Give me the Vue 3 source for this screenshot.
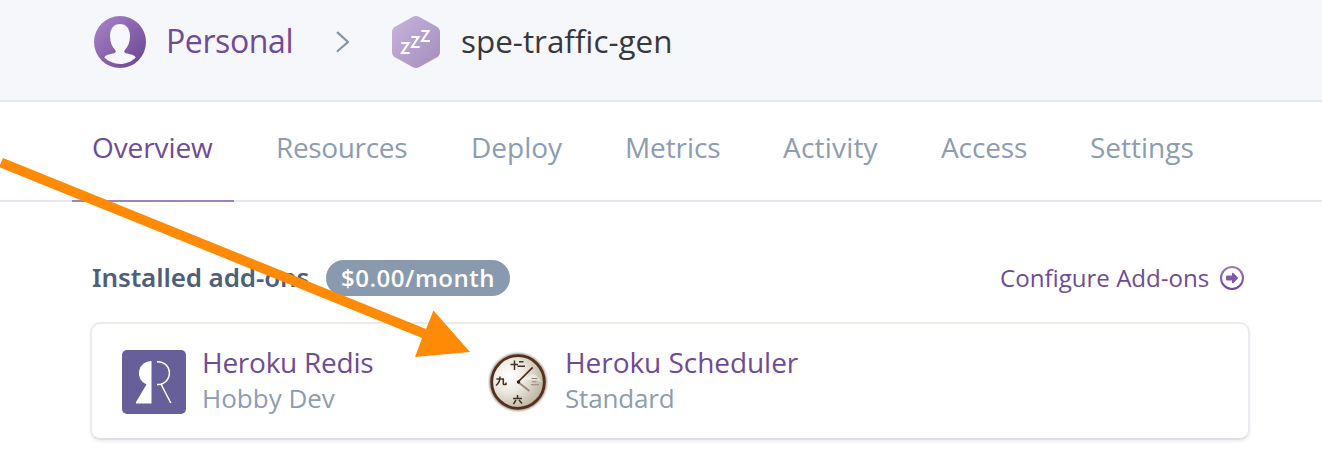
<script setup>
const tabs = [
  { label: 'Overview', cls: 'overview' },
  { label: 'Resources', cls: 'resources' },
  { label: 'Deploy', cls: 'deploy' },
  { label: 'Metrics', cls: 'metrics' },
  { label: 'Activity', cls: 'activity' },
  { label: 'Access', cls: 'access' },
  { label: 'Settings', cls: 'settings' },
]
</script>

<template>
  <div class="page">
    <header class="crumbs">
      <svg class="avatar" width="52" height="52" viewBox="0 0 52 52">
        <defs>
          <linearGradient id="avatarFill" x1="0" y1="0" x2="1" y2="1">
            <stop offset="0" stop-color="#aa86cb" />
            <stop offset="1" stop-color="#69428f" />
          </linearGradient>
        </defs>
        <circle cx="26" cy="26" r="26" fill="url(#avatarFill)" />
        <path d="M26 8C20 8 16 12.500 16 20C16 26 18 31 21.500 34.500C22.500 36 21.500 36.800 19 37.500C15.500 38.300 11.800 38.800 10.300 41.500C14.500 45.800 20 48 26 48S37.500 45.800 41.700 41.500C40.200 38.800 36.500 38.300 33 37.500C30.500 36.800 29.500 36 30.500 34.500C34 31 36 26 36 20C36 12.500 32 8 26 8Z" fill="#f7f8fb" />
      </svg>
      <span class="owner">Personal</span>
      <svg class="chevron" width="14" height="22" viewBox="0 0 14 22">
        <path d="M1.700 1.700L12 11L1.700 20" fill="none" stroke="#8496ac" stroke-width="2.300" stroke-linecap="round" stroke-linejoin="round" />
      </svg>
      <svg class="hex" width="48" height="52" viewBox="0 0 48 52">
        <defs>
          <linearGradient id="hexFill" x1="0" y1="0" x2="1" y2="1">
            <stop offset="0" stop-color="#c7b4dc" />
            <stop offset="1" stop-color="#a48dbc" />
          </linearGradient>
        </defs>
        <path d="M20.500 .9Q24 -.9 27.500 .9L45 10.700Q48 12.600 48 16V36Q48 39.400 45 41.300L27.500 51.100Q24 52.900 20.500 51.100L3 41.300Q0 39.400 0 36V16Q0 12.600 3 10.700Z" fill="url(#hexFill)" />
        <g fill="none" stroke="#fff" stroke-width="2.100">
          <path d="M9.300 27H16.500L10 37H17.700" />
          <path d="M19.300 21H26.500L20 31H27.700" />
          <path d="M29.300 15H36.500L30 25H37.900" />
        </g>
      </svg>
      <span class="app">spe-traffic-gen</span>
    </header>

    <nav class="tabs">
      <a v-for="(t, i) in tabs" :key="t.label" class="tab" :class="[t.cls, { active: i === 0 }]">{{ t.label }}</a>
    </nav>

    <main class="content">
      <div class="heading">
        <h2 class="title">Installed add-ons</h2>
        <span class="price"><span class="amount">$0.00/month</span></span>
        <a class="configure">Configure Add-ons</a>
        <svg class="go" width="24" height="24" viewBox="0 0 24 24">
          <defs>
            <linearGradient id="goStroke" x1="0" y1="0" x2="0" y2="1">
              <stop offset="0" stop-color="#9b77bd" />
              <stop offset="1" stop-color="#6c4494" />
            </linearGradient>
          </defs>
          <circle cx="12" cy="12" r="11" fill="none" stroke="url(#goStroke)" stroke-width="2" />
          <path d="M7 9.500H12V7.300Q12.500 6.200 13.500 7L18.400 12L13.500 17Q12.500 17.800 12 16.700V14.500H7Q6 14.500 6 13.500V10.500Q6 9.500 7 9.500Z" fill="#8259a9" />
        </svg>
      </div>

      <section class="card">
        <div class="addon redis">
          <svg width="64" height="64" viewBox="0 0 64 64">
            <rect width="64" height="64" rx="5" fill="#665f99" />
            <path d="M29.500 11A12.200 12.200 0 0 0 24.500 34.500L14 52V53.500H29.500Z" fill="#fff" />
            <path d="M35 11.700H36A11.400 11.400 0 0 1 36 34.500H35M39 34.200L48.800 53" fill="none" stroke="#fff" stroke-width="1.500" />
          </svg>
          <div class="text">
            <span class="name">Heroku Redis</span>
            <span class="plan">Hobby Dev</span>
          </div>
        </div>
        <div class="addon scheduler">
          <svg width="64" height="64" viewBox="0 0 64 64">
            <defs>
              <radialGradient id="clockFace" cx=".32" cy=".38" r=".72">
                <stop offset="0" stop-color="#fff" />
                <stop offset=".4" stop-color="#eeece5" />
                <stop offset="1" stop-color="#b8b09a" />
              </radialGradient>
              <filter id="clockShadow" x="-20%" y="-20%" width="140%" height="140%">
                <feGaussianBlur stdDeviation="1.300" />
              </filter>
            </defs>
            <circle cx="32" cy="32" r="28.700" fill="#6e625b" opacity=".75" filter="url(#clockShadow)" />
            <circle cx="32" cy="32" r="26.300" fill="url(#clockFace)" stroke="#55301a" stroke-width="2.800" />
            <path d="M33 31L47 24A17 17 0 0 1 56 32Q45 28 33 31Z" fill="#fff" opacity=".45" />
            <g fill="none" stroke="#4a2e22" stroke-width="1.500">
              <path d="M24.500 14.500H32M28.500 10.500V20M33 11.700H37.500M31.500 16.300H39" />
              <path d="M10.500 29H17.300V34Q17.300 35 20 34.300V32.500M14 26.500Q14.300 32 10 35.500" />
              <path d="M27 48.500H36M31.500 45V48M30 50L27.500 54M33 50L36 53.500" />
            </g>
            <path d="M45.500 28.500H51.500M46 31.800H50.500M45 34.700H53" stroke="#918676" stroke-width="1.100" />
            <path d="M32 32L46.700 17.300" stroke="#4a2619" stroke-width="1.700" />
            <path d="M32 32L43.500 41" stroke="#988675" stroke-width="1.700" />
            <circle cx="32.500" cy="32" r="1.700" fill="#352019" />
          </svg>
          <div class="text">
            <span class="name">Heroku Scheduler</span>
            <span class="plan">Standard</span>
          </div>
        </div>
      </section>
    </main>

    <svg class="pointer" width="1322" height="476" viewBox="0 0 1322 476">
      <path d="M3 158L426 329L433.500 310.500L470 352L415 357L422 338L-1 167Z" fill="#ff8a05" />
    </svg>
  </div>
</template>

<style>
body { margin: 0; background: #fff; }
</style>

<style scoped>
.page {
  position: relative;
  width: 1322px;
  height: 476px;
  overflow: hidden;
  background: #fff;
  font-family: "Open Sans", "Noto Sans", sans-serif;
  white-space: nowrap;
}
.crumbs {
  box-sizing: border-box;
  display: flex;
  align-items: center;
  height: 102px;
  padding: 0 0 18px 94px;
  background: #f5f7fb;
  border-bottom: 2px solid #e3e7f1;
}
.crumbs svg { display: block; flex: none; margin-top: 2px; }
.owner, .app { font-size: 32px; line-height: 44px; }
.owner { width: 170px; margin-left: 20px; color: #6f4b97; letter-spacing: -.4px; }
.crumbs .chevron { margin-right: 42px; }
.app { margin-left: 21px; color: #37383f; font-size: 31.4px; }
.tabs {
  box-sizing: border-box;
  display: flex;
  height: 100px;
  padding-left: 72px;
  border-bottom: 2px solid #e3e7f1;
}
.tab {
  box-sizing: border-box;
  flex: none;
  height: 100px;
  padding: 26px 0 0 20px;
  font-size: 28px;
  line-height: 38px;
  letter-spacing: -.1px;
  color: #8c9cb1;
}
.tab.active { color: #6f4b97; border-bottom: 2px solid #9e82b8; }
.overview { width: 162px; margin-right: 22px; }
.resources { width: 195px; letter-spacing: -.35px; }
.deploy { width: 154px; letter-spacing: 0; }
.metrics { width: 158px; }
.activity { width: 158px; letter-spacing: .2px; }
.access { width: 149px; }
.settings { letter-spacing: 0; }
.content { padding: 58px 72px 0 90px; }
.heading { display: flex; align-items: center; height: 36px; }
.title {
  width: 236px;
  margin: 0;
  padding-left: 2px;
  box-sizing: border-box;
  font: 600 26px/34px "Noto Sans", sans-serif;
  height: 36px;
  letter-spacing: -.12px;
  color: #4f5f7b;
}
.price {
  display: flex;
  justify-content: center;
  width: 184px;
  height: 36px;
  border-radius: 18px;
  background: #8999ae;
  color: #fff;
  font: 600 24px/35px "Open Sans", sans-serif;
  letter-spacing: .5px;
}
.configure { margin-left: 490px; width: 220px; font-size: 24.1px; line-height: 36px; color: #6f4b97; }
.go { flex: none; }
.card {
  box-sizing: border-box;
  display: flex;
  height: 118px;
  margin-top: 26px;
  padding: 26px 0 0 30px;
  border: 2px solid #e8ebef;
  border-bottom-color: #dde1e6;
  border-radius: 10px;
  box-shadow: 0 2px 3px rgba(60, 70, 90, .08);
}
.addon { display: flex; width: 364px; }
.addon svg { flex: none; }
.text { display: flex; flex-direction: column; margin-left: 16px; }
.name { margin-top: -7px; font-size: 28px; line-height: 38px; color: #6f4b97; letter-spacing: -.25px; }
.plan { font-size: 26px; line-height: 34px; color: #8c9cb1; }
.scheduler .text { margin-left: 15px; }
.scheduler .name { letter-spacing: -.05px; }
.scheduler .plan { letter-spacing: -.15px; }
.pointer { position: absolute; top: 0; left: 0; }
</style>
